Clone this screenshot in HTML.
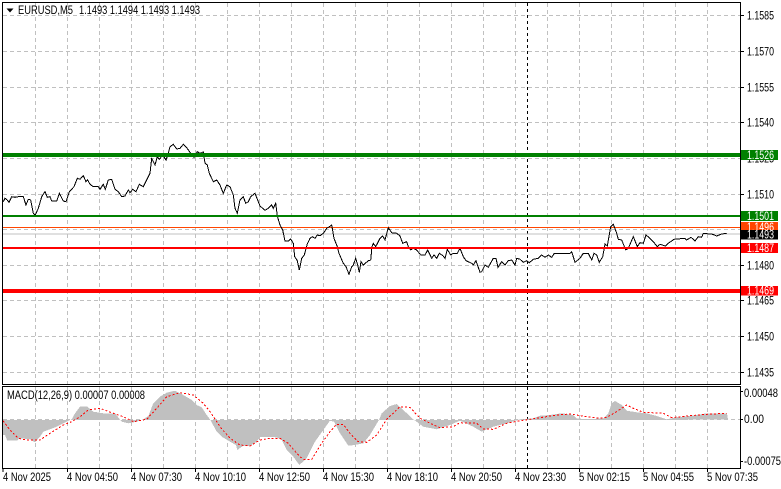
<!DOCTYPE html>
<html><head><meta charset="utf-8"><style>
html,body{margin:0;padding:0;background:#fff;width:781px;height:489px;overflow:hidden}
svg{display:block}
text{font-family:"Liberation Sans",sans-serif;font-size:11.5px;fill:#000}
.g{stroke:#c0c0c0;stroke-width:1;stroke-dasharray:4 3;fill:none}
.w{fill:#fff}
</style></head><body>
<svg width="781" height="489" viewBox="0 0 781 489" xmlns="http://www.w3.org/2000/svg">
<rect width="781" height="489" fill="#fff"/>
<!-- grid -->
<g class="g" shape-rendering="crispEdges">
<path d="M3 15.5H740M3 51.5H740M3 87.5H740M3 122.5H740M3 158.5H740M3 194.5H740M3 229.5H740M3 265.5H740M3 300.5H740M3 336.5H740M3 372.5H740"/>
<path d="M35.5 3V384M67.5 3V384M99.5 3V384M131.5 3V384M163.5 3V384M195.5 3V384M227.5 3V384M259.5 3V384M291.5 3V384M323.5 3V384M355.5 3V384M387.5 3V384M419.5 3V384M451.5 3V384M483.5 3V384M515.5 3V384M547.5 3V384M579.5 3V384M611.5 3V384M643.5 3V384M675.5 3V384M707.5 3V384"/>
<path d="M35.5 387V468M67.5 387V468M99.5 387V468M131.5 387V468M163.5 387V468M195.5 387V468M227.5 387V468M259.5 387V468M291.5 387V468M323.5 387V468M355.5 387V468M387.5 387V468M419.5 387V468M451.5 387V468M483.5 387V468M515.5 387V468M547.5 387V468M579.5 387V468M611.5 387V468M643.5 387V468M675.5 387V468M707.5 387V468"/>
<path d="M3 419.5H740"/>
</g>
<!-- period separator -->
<path d="M527.5 3V468" stroke="#000" stroke-width="1" stroke-dasharray="3 3" fill="none" shape-rendering="crispEdges"/>
<!-- levels -->
<rect x="3" y="233.5" width="737" height="1" fill="#c0c0c0"/>
<rect x="3" y="227" width="737" height="1" fill="#ff4500"/>
<!-- price -->
<polyline fill="none" stroke="#000" stroke-width="1" shape-rendering="crispEdges" points="3.3,201.7 5,198.3 7.3,200 9,202.3 11.7,196.7 15,197.3 18.3,196.7 23.3,196.7 26,205 28.3,199.3 30.7,200 33.3,213.3 35.3,215 38.3,208.3 41.7,196.7 45,191.7 47.3,197.3 50,196.7 51.7,201 56.7,201 59.3,193.3 63.3,201 66,201.7 69.3,191.7 74,186.7 77.3,178.3 80,179.3 83.3,175.7 86,181.7 87.7,180 90,184.3 93.3,186.7 98.3,186.7 100,189.3 103.3,184.3 105.3,189.3 108.3,180 111.7,179.3 115,189.3 118.3,191.7 121.7,196.7 125,196 128.3,190 130,192.7 132.7,189.3 136,191.7 139.3,184.3 143.3,186.7 148.3,176.7 150,173.3 151.7,158.3 155,165 157.3,156.7 159.3,159.3 162.7,155 166,160 168.3,153.3 170,146.7 173.3,144.3 176.7,149 180,148.3 183.3,144.3 186.7,147.7 190.7,153.3 194,157.3 197.3,151.7 200,153.3 203.3,152 205,163.3 207.3,165 209.3,173.3 213.3,181.7 216.7,180 220,185 223.3,193.3 226.7,185 230,186.7 233.3,195 235,208.3 237.3,213.3 240,200 243.3,196.7 245.7,203.3 248.3,201.7 250.7,196.7 255,193.3 258.3,201.7 260,206 262.7,208.3 265,210.3 268.3,208.3 271.7,205 273.3,208.3 275.7,203.3 277.3,216 280,225 282.7,230 285,241 288.3,241 290.7,239 293.3,243.3 294.7,256.7 297.3,260.7 299.3,270 301.7,258.3 304.3,255 307.3,244 310,238.3 312.3,236.7 315,238.3 317.3,235 320,235.7 323.3,233.3 326.7,228.3 329.3,226.7 331.7,225 334,238.3 337.3,246.7 339,253.3 343.3,263.3 346,266.7 349,274.3 351.7,266.7 353.3,265 355.7,258.3 357.7,265 359.3,272.3 361,261.7 363.3,265 368.3,260.7 370.7,260 372,246.7 373.3,243.3 375.7,246.7 380,238.3 382.7,236 385,240 388.3,227.7 391.7,232.7 396.7,233.3 400,236 402.7,243.3 406.7,241.7 408.3,246.7 410.7,250 413.3,248.3 416.7,250 420.7,255 425,255 427.7,250 431.7,258.3 434,255 436.7,258.3 439.3,253.3 443.3,256 445,258.3 447.3,249.3 450.7,255 453.3,253.3 457.3,253.3 460,248.3 463.3,256.7 466,260.7 471.7,263.3 473.3,265 476,260.7 480,272.3 481.7,271.7 485,265 488.3,267.3 493.3,258.3 496,258.3 498,267.3 501.7,261.7 505,265 508.3,260.7 511.7,260 515,265 516.7,258.3 520,259.3 523.3,262.3 526.7,260.7 529.3,262.7 533.3,259.3 538.3,258.3 541.7,255 545,257.3 548.3,255 551.7,257.3 554.3,253.3 570,253.3 571.7,251.7 575,262.3 580,258.3 583.3,253.3 588.3,253.3 591.7,260 594,253.3 596.7,255 599.3,262.3 602.7,256.7 605,244 607.3,246 610.7,226.7 613.3,224.3 616.7,233.3 618.3,239.3 621.7,240 625.7,250 628.3,248.3 633.3,236.7 637.3,246.7 640,242.7 643.3,243.3 646,235 650,238.3 653.3,241.7 657.3,246.7 660,244.3 665.3,246 668.3,243.3 674,239.3 685,238.3 686.7,240 691,237.3 695,241 698.3,236.7 701.7,237.3 703.3,233.3 712.7,234.3 716.7,236 721.7,234 726.7,233.3"/>
<!-- horizontal lines -->
<rect x="3" y="153" width="737" height="4" fill="#008000"/>
<rect x="3" y="215" width="737" height="2" fill="#008000"/>
<rect x="3" y="247" width="737" height="2" fill="#ff0000"/>
<rect x="3" y="289" width="737" height="4" fill="#ff0000"/>
<!-- MACD histogram -->
<polygon fill="#c0c0c0" shape-rendering="crispEdges" points="3,419 3,435 5,435 7.3,440.7 16.7,440.7 20,438.3 30,439.3 35,442.3 40,436.7 43.3,431.7 50,429.3 56.7,426.7 66.7,421.7 71.7,419.3 75,413.3 80,406.7 87.3,406.7 93.3,411.7 103.3,413.3 115,413.3 121.7,421.7 128.3,423.3 136.7,421.7 143.3,419.3 148.3,416 153.3,403.3 160,396.7 166.7,392.7 175,390.7 183.3,395 191.7,400 196.7,405 201.7,407.3 206.7,415 210,419.3 216.7,431.7 221.7,436.7 230,441.7 236,445 237.3,450 243.3,445.7 250,446 256.7,441.7 260,437 266.7,437 276.7,437.3 281.7,440 286.7,450 293.3,456.7 299.3,465 306.7,458.3 315,441.7 323.3,430 330,420.7 334,421.7 340,433.3 348.3,445.7 355,445 363.3,443.3 370,435 379,420 381.7,413.3 390,406 396.7,404 403.3,410 413.3,419.3 423.3,426.7 436.7,429.3 450,425 460,420.7 473.3,426.7 481.7,431.7 493.3,426.7 506.7,423.3 520,419.3 533.3,418.3 540,415.7 550,415 561.7,413.3 573.3,415 576.7,418.3 586.7,419.3 603.3,418.3 608.3,413.3 611.7,403.3 615,401 621.7,405 626.7,410.7 636.7,412.3 646.7,413.3 656.7,416 666.7,419.3 676.7,417.3 690,416 706.7,413.3 727,413.3 728,419.3 666,420 600,420 520,420 413,420 403,420 340,420 210,420 150,420 100,420 60,420 3,420"/>
<!-- MACD signal -->
<polyline fill="none" stroke="#ff0000" stroke-width="1" stroke-dasharray="2 2" shape-rendering="crispEdges" points="3,420.7 10,430 18.3,438.3 26.7,440 40,440 50,433.3 63.3,425 71.7,421.7 80,416.7 88.3,410 100,408.3 113.3,413.3 123.3,416.7 133.3,421.7 146.7,419.3 156.7,408.3 166.7,396.7 180,392.7 193.3,395 203.3,403.3 210,411.7 220,426.7 230,438.3 240,445 250,446 260,440 270,438.3 280,438.3 288.3,443.3 298.3,455 303.3,459.3 311.7,459.3 321.7,443.3 330,431.7 336.7,424.3 343.3,424.3 350,433.3 358.3,441.7 366.7,442.3 376.7,435 386.7,419.3 400,406.7 410,407.3 420,418.3 430,423.3 440,427.7 453.3,426.7 460,422.7 476.7,423.3 483.3,429 493.3,429.3 506.7,423.3 520,420.7 530,419.3 540,417.7 556.7,415 570,414 586.7,416.7 600,418.3 606.7,417.3 616.7,411.7 626.7,405 633.3,408.3 643.3,412.3 663.3,413.3 671.7,417.7 686.7,416 706.7,414.3 726.7,413.3"/>
<!-- frames -->
<g fill="none" stroke="#000" stroke-width="1" shape-rendering="crispEdges">
<rect x="2.5" y="2.5" width="738" height="382"/>
<rect x="2.5" y="386.5" width="738" height="82"/>
<path d="M741 15.5h3M741 51.5h3M741 87.5h3M741 122.5h3M741 158.5h3M741 194.5h3M741 265.5h3M741 300.5h3M741 336.5h3M741 372.5h3M741 391.5h2M741 419.5h2M741 461.5h2"/>
<path d="M3 469v3M67.5 469v3M131.5 469v3M195.5 469v3M259.5 469v3M323.5 469v3M387.5 469v3M451.5 469v3M515.5 469v3M579.5 469v3M643.5 469v3M707.5 469v3"/>
</g>
<!-- title -->
<polygon points="6.5,8.5 13.500,8.5 10,12.500" fill="#000"/>
<text x="18" y="14" textLength="55" lengthAdjust="spacingAndGlyphs">EURUSD,M5</text>
<text x="79" y="14" textLength="121" lengthAdjust="spacingAndGlyphs">1.1493 1.1494 1.1493 1.1493</text>
<text x="7" y="399" textLength="138" lengthAdjust="spacingAndGlyphs">MACD(12,26,9) 0.00007 0.00008</text>
<!-- price axis -->
<g>
<text x="747" y="19.500" textLength="27" lengthAdjust="spacingAndGlyphs">1.1585</text>
<text x="747" y="55.500" textLength="27" lengthAdjust="spacingAndGlyphs">1.1570</text>
<text x="747" y="91.500" textLength="27" lengthAdjust="spacingAndGlyphs">1.1555</text>
<text x="747" y="126.500" textLength="27" lengthAdjust="spacingAndGlyphs">1.1540</text>
<text x="747" y="162.500" textLength="27" lengthAdjust="spacingAndGlyphs">1.1525</text>
<text x="747" y="198.500" textLength="27" lengthAdjust="spacingAndGlyphs">1.1510</text>
<text x="747" y="269.500" textLength="27" lengthAdjust="spacingAndGlyphs">1.1480</text>
<text x="747" y="304.500" textLength="27" lengthAdjust="spacingAndGlyphs">1.1465</text>
<text x="747" y="340.500" textLength="27" lengthAdjust="spacingAndGlyphs">1.1450</text>
<text x="747" y="376.500" textLength="27" lengthAdjust="spacingAndGlyphs">1.1435</text>
</g>
<!-- labels -->
<rect x="741" y="150" width="37" height="10" fill="#008000"/>
<text class="w" x="747" y="159" textLength="27" lengthAdjust="spacingAndGlyphs">1.1526</text>
<rect x="741" y="211" width="37" height="10" fill="#008000"/>
<text class="w" x="747" y="220" textLength="27" lengthAdjust="spacingAndGlyphs">1.1501</text>
<rect x="741" y="222" width="37" height="9" fill="#ff4500"/>
<text class="w" x="747" y="231" textLength="27" lengthAdjust="spacingAndGlyphs">1.1496</text>
<rect x="741" y="230" width="37" height="9.500" fill="#000"/>
<text class="w" x="747" y="238.500" textLength="27" lengthAdjust="spacingAndGlyphs">1.1493</text>
<rect x="741" y="243" width="37" height="10" fill="#ff0000"/>
<text class="w" x="747" y="252" textLength="27" lengthAdjust="spacingAndGlyphs">1.1487</text>
<rect x="741" y="286" width="37" height="9.500" fill="#ff0000"/>
<text class="w" x="747" y="294.500" textLength="27" lengthAdjust="spacingAndGlyphs">1.1469</text>
<!-- macd axis -->
<text x="744" y="397" textLength="34" lengthAdjust="spacingAndGlyphs">0.00048</text>
<text x="744" y="423" textLength="20" lengthAdjust="spacingAndGlyphs">0.00</text>
<text x="744" y="465" textLength="37" lengthAdjust="spacingAndGlyphs">-0.00075</text>
<!-- time axis -->
<g>
<text x="3" y="481" textLength="48" lengthAdjust="spacingAndGlyphs">4 Nov 2025</text>
<text x="67" y="481" textLength="51" lengthAdjust="spacingAndGlyphs">4 Nov 04:50</text>
<text x="131" y="481" textLength="51" lengthAdjust="spacingAndGlyphs">4 Nov 07:30</text>
<text x="195" y="481" textLength="51" lengthAdjust="spacingAndGlyphs">4 Nov 10:10</text>
<text x="259" y="481" textLength="51" lengthAdjust="spacingAndGlyphs">4 Nov 12:50</text>
<text x="323" y="481" textLength="51" lengthAdjust="spacingAndGlyphs">4 Nov 15:30</text>
<text x="387" y="481" textLength="51" lengthAdjust="spacingAndGlyphs">4 Nov 18:10</text>
<text x="451" y="481" textLength="51" lengthAdjust="spacingAndGlyphs">4 Nov 20:50</text>
<text x="515" y="481" textLength="51" lengthAdjust="spacingAndGlyphs">4 Nov 23:30</text>
<text x="579" y="481" textLength="51" lengthAdjust="spacingAndGlyphs">5 Nov 02:15</text>
<text x="643" y="481" textLength="51" lengthAdjust="spacingAndGlyphs">5 Nov 04:55</text>
<text x="707" y="481" textLength="51" lengthAdjust="spacingAndGlyphs">5 Nov 07:35</text>
</g>
</svg>
</body></html>
